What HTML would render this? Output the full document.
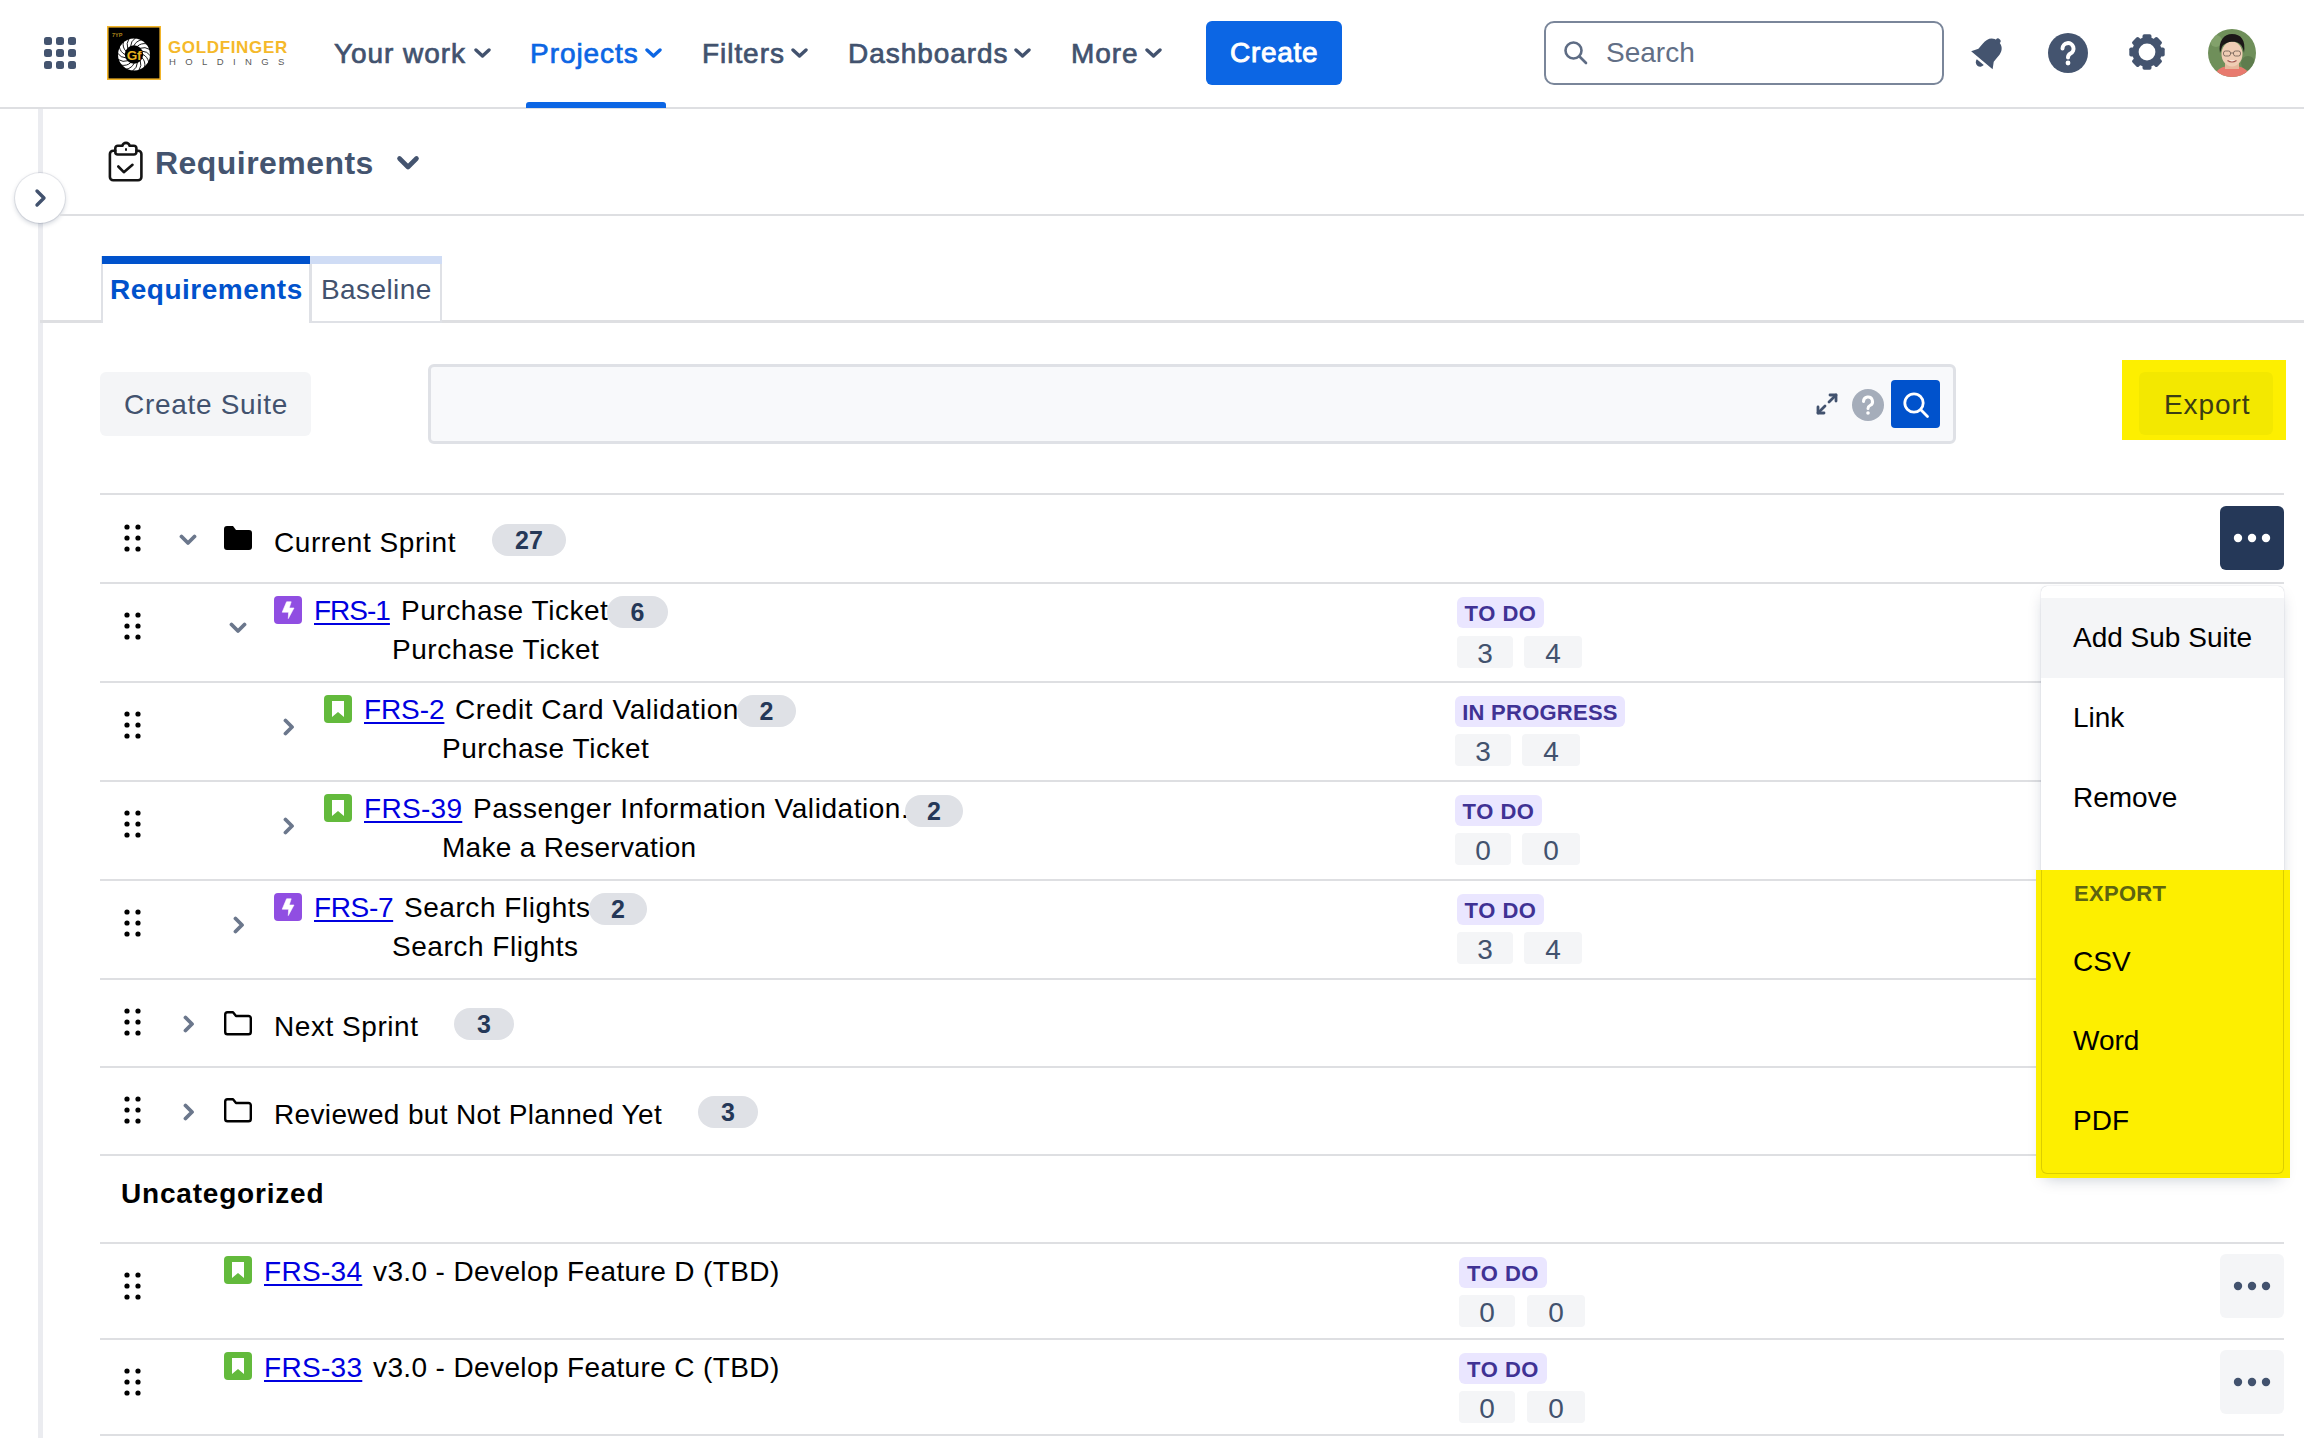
<!DOCTYPE html>
<html><head><meta charset="utf-8">
<style>
*{box-sizing:border-box;margin:0;padding:0}
html,body{width:2304px;height:1438px;overflow:hidden;background:#fff;font-family:"Liberation Sans",sans-serif;}
.a{position:absolute}
.t{position:absolute;white-space:nowrap;line-height:1}
.nav{color:#42526e;font-size:28px;font-weight:normal;-webkit-text-stroke:0.7px currentColor;letter-spacing:0.95px}
.hl{background:#fdef00}
.line{position:absolute;background:#dedfe2}
.bdg{height:32px;border-radius:16px;background:#dfe1e6;color:#253858;font-weight:bold;font-size:25px;line-height:33px;text-align:center}
.loz{height:31px;border-radius:6px;background:#eae6ff;color:#403294;font-weight:bold;font-size:22px;line-height:33px;text-align:center;white-space:nowrap;letter-spacing:.5px}
.num{height:32px;border-radius:4px;background:#f4f5f7;color:#42526e;font-size:28px;line-height:35px;text-align:center}
.dd{font-size:28px;color:#000}
</style></head><body>
<!-- NAV -->
<div class="a" style="left:0;top:0;width:2304px;height:108px;background:#fff"></div>
<div class="line" style="left:0;top:107px;width:2304px;height:2px"></div>
<!-- grid icon -->
<svg class="a" style="left:44px;top:37px" width="32" height="32" viewBox="0 0 32 32" fill="#44546f">
<rect x="0" y="0" width="8" height="8" rx="2.5"/><rect x="12" y="0" width="8" height="8" rx="2.5"/><rect x="24" y="0" width="8" height="8" rx="2.5"/>
<rect x="0" y="12" width="8" height="8" rx="2.5"/><rect x="12" y="12" width="8" height="8" rx="2.5"/><rect x="24" y="12" width="8" height="8" rx="2.5"/>
<rect x="0" y="24" width="8" height="8" rx="2.5"/><rect x="12" y="24" width="8" height="8" rx="2.5"/><rect x="24" y="24" width="8" height="8" rx="2.5"/>
</svg>
<!-- logo -->
<svg class="a" style="left:107px;top:26px" width="54" height="54" viewBox="0 0 54 54">
<rect x="0.8" y="0.8" width="52.4" height="52.4" fill="#000" stroke="#f2b52a" stroke-width="1.6"/>
<circle cx="27" cy="28.5" r="16" fill="#fff"/>
<circle cx="27" cy="28.5" r="9.2" fill="#000"/>
<g stroke="#000" stroke-width="0.9" fill="none"><path d="M35.80 28.50 Q40.37 30.38 41.83 36.39"/><path d="M35.13 31.87 Q38.63 35.35 37.69 41.46"/><path d="M33.22 34.72 Q35.12 39.28 31.91 44.57"/><path d="M30.37 36.63 Q30.38 41.57 25.39 45.22"/><path d="M27.00 37.30 Q25.12 41.87 19.11 43.33"/><path d="M23.63 36.63 Q20.15 40.13 14.04 39.19"/><path d="M20.78 34.72 Q16.22 36.62 10.93 33.41"/><path d="M18.87 31.87 Q13.93 31.88 10.28 26.89"/><path d="M18.20 28.50 Q13.63 26.62 12.17 20.61"/><path d="M18.87 25.13 Q15.37 21.65 16.31 15.54"/><path d="M20.78 22.28 Q18.88 17.72 22.09 12.43"/><path d="M23.63 20.37 Q23.62 15.43 28.61 11.78"/><path d="M27.00 19.70 Q28.88 15.13 34.89 13.67"/><path d="M30.37 20.37 Q33.85 16.87 39.96 17.81"/><path d="M33.22 22.28 Q37.78 20.38 43.07 23.59"/><path d="M35.13 25.13 Q40.07 25.12 43.72 30.11"/></g>
<text x="27" y="34.0" font-family="Liberation Sans" font-weight="bold" font-size="13.5" fill="#e8b21f" text-anchor="middle" letter-spacing="-0.3">Gf</text>
<text x="5" y="11" font-family="Liberation Sans" font-weight="bold" font-size="5.5" fill="#a8821a">7YP</text>
</svg>
<div class="t" style="left:168px;top:39px;font-size:17px;font-weight:bold;color:#f5b92a;letter-spacing:0.65px">GOLDFINGER</div>
<div class="t" style="left:169px;top:57px;font-size:9.5px;color:#5a5a5a;letter-spacing:9.4px;font-weight:normal">HOLDINGS</div>

<div class="t nav" style="left:334px;top:40px">Your work</div>
<svg class="a" style="left:474px;top:47px" width="17" height="12" viewBox="0 0 17 12"><path d="M2 3 L8.5 9 L15 3" fill="none" stroke="#42526e" stroke-width="3.4" stroke-linecap="round" stroke-linejoin="round"/></svg>
<div class="t nav" style="left:530px;top:40px;color:#0c66e4">Projects</div>
<svg class="a" style="left:645px;top:47px" width="17" height="12" viewBox="0 0 17 12"><path d="M2 3 L8.5 9 L15 3" fill="none" stroke="#0c66e4" stroke-width="3.4" stroke-linecap="round" stroke-linejoin="round"/></svg>
<div class="a" style="left:526px;top:102px;width:140px;height:6px;background:#0c66e4;border-radius:3px 3px 0 0"></div>
<div class="t nav" style="left:702px;top:40px">Filters</div>
<svg class="a" style="left:791px;top:47px" width="17" height="12" viewBox="0 0 17 12"><path d="M2 3 L8.5 9 L15 3" fill="none" stroke="#42526e" stroke-width="3.4" stroke-linecap="round" stroke-linejoin="round"/></svg>
<div class="t nav" style="left:848px;top:40px">Dashboards</div>
<svg class="a" style="left:1014px;top:47px" width="17" height="12" viewBox="0 0 17 12"><path d="M2 3 L8.5 9 L15 3" fill="none" stroke="#42526e" stroke-width="3.4" stroke-linecap="round" stroke-linejoin="round"/></svg>
<div class="t nav" style="left:1071px;top:40px">More</div>
<svg class="a" style="left:1145px;top:47px" width="17" height="12" viewBox="0 0 17 12"><path d="M2 3 L8.5 9 L15 3" fill="none" stroke="#42526e" stroke-width="3.4" stroke-linecap="round" stroke-linejoin="round"/></svg>
<div class="a" style="left:1206px;top:21px;width:136px;height:64px;background:#0c66e4;border-radius:6px"></div>
<div class="t" style="left:1230px;top:39px;color:#fff;font-size:28px;font-weight:normal;-webkit-text-stroke:0.9px #fff;letter-spacing:0.7px">Create</div>

<div class="a" style="left:1544px;top:21px;width:400px;height:64px;border:2px solid #7a869a;border-radius:10px"></div>
<svg class="a" style="left:1563px;top:40px" width="26" height="26" viewBox="0 0 26 26"><circle cx="10.5" cy="10.5" r="8" fill="none" stroke="#5e6c84" stroke-width="2.6"/><line x1="16.5" y1="16.5" x2="23" y2="23" stroke="#5e6c84" stroke-width="2.6" stroke-linecap="round"/></svg>
<div class="t" style="left:1606px;top:39px;font-size:28px;color:#626f86;letter-spacing:0px">Search</div>
<!-- bell -->
<svg class="a" style="left:1966px;top:31px" width="44" height="44" viewBox="0 0 44 44"><g transform="rotate(40 22 22)" fill="#44546f"><path d="M22 6.5 C14.5 6.5 12 12 12 18 V25 L8 31.5 H36 L32 25 V18 C32 12 29.5 6.5 22 6.5z"/><circle cx="22" cy="6.5" r="2.6"/><path d="M17.5 34 a4.5 4.5 0 0 0 9 0z"/></g></svg>
<!-- help -->
<svg class="a" style="left:2047px;top:32px" width="42" height="42" viewBox="0 0 42 42"><circle cx="21" cy="21" r="20" fill="#44546f"/><path d="M15.5 16.5 a5.5 5.5 0 1 1 8 5 c-1.8 1 -2.5 2 -2.5 4" fill="none" stroke="#fff" stroke-width="4" stroke-linecap="round"/><circle cx="21" cy="31" r="2.4" fill="#fff"/></svg>
<!-- gear -->
<svg class="a" style="left:2125px;top:30px" width="44" height="44" viewBox="0 0 44 44"><g fill="#44546f"><circle cx="22" cy="22" r="14.8"/><rect x="17.5" y="4.3" width="9" height="8" rx="1.8" transform="rotate(0 22 22)"/><rect x="17.5" y="4.3" width="9" height="8" rx="1.8" transform="rotate(45 22 22)"/><rect x="17.5" y="4.3" width="9" height="8" rx="1.8" transform="rotate(90 22 22)"/><rect x="17.5" y="4.3" width="9" height="8" rx="1.8" transform="rotate(135 22 22)"/><rect x="17.5" y="4.3" width="9" height="8" rx="1.8" transform="rotate(180 22 22)"/><rect x="17.5" y="4.3" width="9" height="8" rx="1.8" transform="rotate(225 22 22)"/><rect x="17.5" y="4.3" width="9" height="8" rx="1.8" transform="rotate(270 22 22)"/><rect x="17.5" y="4.3" width="9" height="8" rx="1.8" transform="rotate(315 22 22)"/></g><circle cx="22" cy="22" r="8.4" fill="#fff"/></svg>
<!-- avatar -->
<svg class="a" style="left:2208px;top:29px" width="48" height="48" viewBox="0 0 48 48"><defs><clipPath id="cav"><circle cx="24" cy="24" r="24"/></clipPath></defs><g clip-path="url(#cav)"><rect width="48" height="48" fill="#6f8f5a"/><circle cx="8" cy="12" r="6" fill="#8aa872" opacity=".7"/><circle cx="40" cy="34" r="7" fill="#577447" opacity=".7"/><path d="M6 48 C8 40 14 37 24 37 C34 37 40 40 42 48z" fill="#e87a6e"/><path d="M17 34 h14 v6 h-14z" fill="#e6b89c"/><ellipse cx="24" cy="25" rx="10.5" ry="12.5" fill="#efcdb4"/><path d="M12 24 C10 12 16 5 24 5 C33 5 38 11 36 24 C35 17 32 14 28 13 C22 12 16 14 14 18z" fill="#1b1717"/><g fill="none" stroke="#6b5b50" stroke-width=".8"><rect x="15.5" y="22" width="7" height="5" rx="2"/><rect x="25.5" y="22" width="7" height="5" rx="2"/><path d="M22.5 24 h3"/></g><path d="M19.5 31.5 q4.5 3 9 0" stroke="#a0524a" stroke-width="1.2" fill="#fff"/></g></svg>
<!-- SIDEBAR -->
<div class="a" style="left:38px;top:109px;width:5px;height:1329px;background:#ebecf0"></div>
<div class="a" style="left:15px;top:173px;width:50px;height:50px;border-radius:50%;background:#fff;box-shadow:0 0 0 1px rgba(9,30,66,.08),0 2px 5px rgba(9,30,66,.2)"></div>
<svg class="a" style="left:32px;top:188px" width="18" height="20" viewBox="0 0 18 20"><path d="M5 3 L12 10 L5 17" fill="none" stroke="#42526e" stroke-width="3.4" stroke-linecap="round" stroke-linejoin="round"/></svg>

<!-- HEADER -->
<svg class="a" style="left:107px;top:141px" width="38" height="42" viewBox="0 0 38 42"><g fill="none" stroke="#141414" stroke-width="2.6" stroke-linejoin="round" stroke-linecap="round"><path d="M8.3 9.8 H6.2 a3.3 3.3 0 0 0 -3.3 3.3 V35.9 a3.3 3.3 0 0 0 3.3 3.3 H31.1 a3.3 3.3 0 0 0 3.3 -3.3 V13.1 a3.3 3.3 0 0 0 -3.3 -3.3 H29.4"/><path d="M8.3 7.2 a2.5 2.5 0 0 1 2.5 -2.5 H15.5 a3.5 2.8 0 0 1 7 0 H26.9 a2.5 2.5 0 0 1 2.5 2.5 V11 a2.5 2.5 0 0 1 -2.5 2.5 H10.8 a2.5 2.5 0 0 1 -2.5 -2.5z"/><path d="M11.3 25.5 L16.8 31.2 L25.5 23.8"/></g><rect x="18" y="7" width="2" height="3" rx="1" fill="#141414"/></svg>
<div class="t" style="left:155px;top:147px;font-size:32px;font-weight:bold;color:#44546f;letter-spacing:0.45px">Requirements</div>
<svg class="a" style="left:396px;top:154px" width="24" height="18" viewBox="0 0 24 18"><path d="M3.5 4.5 L12 13 L20.5 4.5" fill="none" stroke="#44546f" stroke-width="4.6" stroke-linecap="round" stroke-linejoin="round"/></svg>
<div class="line" style="left:60px;top:214px;width:2244px;height:2px"></div>

<!-- TABS -->
<div class="line" style="left:40px;top:320px;width:2264px;height:3px"></div>
<div class="a" style="left:101px;top:256px;width:210px;height:67px;background:#fff;border:2px solid #dfe1e6;border-top:none;border-bottom:none"></div>
<div class="a" style="left:310px;top:256px;width:132px;height:67px;background:#fff;border:2px solid #dfe1e6;border-top:none"></div>
<div class="a" style="left:102px;top:256px;width:208px;height:8px;background:#0052cc"></div>
<div class="a" style="left:310px;top:256px;width:132px;height:8px;background:#cfdcf5"></div>
<div class="t" style="left:110px;top:276px;font-size:28px;font-weight:bold;color:#0052cc;letter-spacing:0.5px">Requirements</div>
<div class="t" style="left:321px;top:276px;font-size:28px;color:#42526e;letter-spacing:0.4px">Baseline</div>

<!-- TOOLBAR -->
<div class="a" style="left:100px;top:372px;width:211px;height:64px;background:#f4f5f7;border-radius:6px"></div>
<div class="t" style="left:124px;top:391px;font-size:28px;color:#42526e;letter-spacing:0.7px">Create Suite</div>
<div class="a" style="left:428px;top:364px;width:1528px;height:80px;background:#f8f9fb;border:3px solid #dfe1e6;border-radius:6px"></div>
<svg class="a" style="left:1814px;top:391px" width="26" height="26" viewBox="0 0 26 26"><g fill="none" stroke="#42526e" stroke-width="2.8" stroke-linecap="round" stroke-linejoin="round"><path d="M15 11 L22 4"/><path d="M16 4 H22 V10"/><path d="M11 15 L4 22"/><path d="M4 16 V22 H10"/></g></svg>
<svg class="a" style="left:1851px;top:388px" width="34" height="34" viewBox="0 0 34 34"><circle cx="17" cy="17" r="16" fill="#a5adba"/><path d="M12.5 13.5 a4.5 4.5 0 1 1 6.5 4 c-1.3 .7 -2 1.5 -2 3" fill="none" stroke="#fff" stroke-width="3" stroke-linecap="round"/><circle cx="17" cy="25" r="1.8" fill="#fff"/></svg>
<div class="a" style="left:1891px;top:380px;width:49px;height:48px;background:#0052cc;border-radius:4px"></div>
<svg class="a" style="left:1901px;top:390px" width="30" height="30" viewBox="0 0 30 30"><circle cx="13" cy="13" r="9.2" fill="none" stroke="#fff" stroke-width="2.8"/><line x1="19.8" y1="19.8" x2="26.5" y2="26.5" stroke="#fff" stroke-width="2.8" stroke-linecap="round"/></svg>

<div class="a hl" style="left:2122px;top:360px;width:164px;height:80px"></div>
<div class="a" style="left:2139px;top:372px;width:134px;height:63px;background:#f3e800;border-radius:6px"></div>
<div class="t" style="left:2164px;top:391px;font-size:28px;color:#3b3d14;letter-spacing:0.9px">Export</div>

<!-- TREE -->
<div class="line" style="left:100px;top:493px;width:2184px;height:2px"></div>
<div class="line" style="left:100px;top:582px;width:2184px;height:2px"></div>
<div class="line" style="left:100px;top:681px;width:2184px;height:2px"></div>
<div class="line" style="left:100px;top:780px;width:2184px;height:2px"></div>
<div class="line" style="left:100px;top:879px;width:2184px;height:2px"></div>
<div class="line" style="left:100px;top:978px;width:2184px;height:2px"></div>
<div class="line" style="left:100px;top:1066px;width:2184px;height:2px"></div>
<div class="line" style="left:100px;top:1154px;width:2184px;height:2px"></div>
<div class="line" style="left:100px;top:1242px;width:2184px;height:2px"></div>
<div class="line" style="left:100px;top:1338px;width:2184px;height:2px"></div>
<div class="line" style="left:100px;top:1434px;width:2184px;height:2px"></div>
<svg class="a" style="left:124px;top:524px" width="18" height="28" viewBox="0 0 18 28" fill="#000"><circle cx="3" cy="3" r="2.6"/><circle cx="14" cy="3" r="2.6"/><circle cx="3" cy="14" r="2.6"/><circle cx="14" cy="14" r="2.6"/><circle cx="3" cy="25" r="2.6"/><circle cx="14" cy="25" r="2.6"/></svg>
<svg class="a" style="left:179px;top:534px" width="18" height="12" viewBox="0 0 18 12"><path d="M2.5 2.5 L9 9 L15.5 2.5" fill="none" stroke="#6b778c" stroke-width="3.8" stroke-linecap="round" stroke-linejoin="round"/></svg>
<svg class="a" style="left:224px;top:526px" width="28" height="25" viewBox="0 0 28 25"><path d="M0 3 a3 3 0 0 1 3 -3 H9 L12 4 H25 a3 3 0 0 1 3 3 V21 a3 3 0 0 1 -3 3 H3 a3 3 0 0 1 -3 -3z" fill="#000"/></svg>
<div class="t" style="left:274px;top:529px;font-size:28px;color:#000;font-weight:normal;letter-spacing:0.55px;">Current Sprint</div>
<div class="a bdg" style="left:492px;top:524px;width:74px">27</div>
<div class="a" style="left:2220px;top:506px;width:64px;height:64px;border-radius:6px;background:#253858"></div>
<svg class="a" style="left:2220px;top:506px" width="64" height="64" viewBox="0 0 64 64" fill="#fff"><circle cx="18" cy="32" r="4.2"/><circle cx="32" cy="32" r="4.2"/><circle cx="46" cy="32" r="4.2"/></svg>
<svg class="a" style="left:124px;top:612px" width="18" height="28" viewBox="0 0 18 28" fill="#000"><circle cx="3" cy="3" r="2.6"/><circle cx="14" cy="3" r="2.6"/><circle cx="3" cy="14" r="2.6"/><circle cx="14" cy="14" r="2.6"/><circle cx="3" cy="25" r="2.6"/><circle cx="14" cy="25" r="2.6"/></svg>
<svg class="a" style="left:229px;top:622px" width="18" height="12" viewBox="0 0 18 12"><path d="M2.5 2.5 L9 9 L15.5 2.5" fill="none" stroke="#6b778c" stroke-width="3.8" stroke-linecap="round" stroke-linejoin="round"/></svg>
<svg class="a" style="left:274px;top:596px" width="28" height="28" viewBox="0 0 28 28"><rect width="28" height="28" rx="4" fill="#904ee2"/><path d="M12.6 5.8 H17.2 L15.2 12 H20 L14.3 22.6 L14.6 16.2 H8.2z" fill="#fff" stroke="#fff" stroke-width="0.6" stroke-linejoin="round"/></svg>
<div class="t" style="left:314px;top:597px;font-size:28px;color:#000;font-weight:normal;letter-spacing:-1.0px;color:#0000e0;text-decoration:underline;text-underline-offset:3px;text-decoration-thickness:2px">FRS-1</div>
<div class="t" style="left:401px;top:597px;font-size:28px;color:#000;font-weight:normal;letter-spacing:0.55px;">Purchase Ticket</div>
<div class="a bdg" style="left:607px;top:596px;width:61px">6</div>
<div class="t" style="left:392px;top:636px;font-size:28px;color:#000;font-weight:normal;letter-spacing:0.55px;">Purchase Ticket</div>
<div class="a loz" style="left:1457px;top:597px;width:87px">TO DO</div>
<div class="a num" style="left:1457px;top:636px;width:56px">3</div>
<div class="a num" style="left:1524px;top:636px;width:58px">4</div>
<svg class="a" style="left:124px;top:711px" width="18" height="28" viewBox="0 0 18 28" fill="#000"><circle cx="3" cy="3" r="2.6"/><circle cx="14" cy="3" r="2.6"/><circle cx="3" cy="14" r="2.6"/><circle cx="14" cy="14" r="2.6"/><circle cx="3" cy="25" r="2.6"/><circle cx="14" cy="25" r="2.6"/></svg>
<svg class="a" style="left:283px;top:718px" width="12" height="18" viewBox="0 0 12 18"><path d="M2.5 2.5 L9 9 L2.5 15.5" fill="none" stroke="#6b778c" stroke-width="3.8" stroke-linecap="round" stroke-linejoin="round"/></svg>
<svg class="a" style="left:324px;top:695px" width="28" height="28" viewBox="0 0 28 28"><rect width="28" height="28" rx="4" fill="#63ba3c"/><path d="M8 6 H20 V22 L14 17 L8 22z" fill="#fff"/></svg>
<div class="t" style="left:364px;top:696px;font-size:28px;color:#000;font-weight:normal;letter-spacing:-0.1px;color:#0000e0;text-decoration:underline;text-underline-offset:3px;text-decoration-thickness:2px">FRS-2</div>
<div class="t" style="left:455px;top:696px;font-size:28px;color:#000;font-weight:normal;letter-spacing:0.55px;">Credit Card Validation</div>
<div class="a bdg" style="left:737px;top:695px;width:59px">2</div>
<div class="t" style="left:442px;top:735px;font-size:28px;color:#000;font-weight:normal;letter-spacing:0.55px;">Purchase Ticket</div>
<div class="a loz" style="left:1455px;top:696px;width:170px"><span style="letter-spacing:.25px">IN PROGRESS</span></div>
<div class="a num" style="left:1455px;top:734px;width:56px">3</div>
<div class="a num" style="left:1522px;top:734px;width:58px">4</div>
<svg class="a" style="left:124px;top:810px" width="18" height="28" viewBox="0 0 18 28" fill="#000"><circle cx="3" cy="3" r="2.6"/><circle cx="14" cy="3" r="2.6"/><circle cx="3" cy="14" r="2.6"/><circle cx="14" cy="14" r="2.6"/><circle cx="3" cy="25" r="2.6"/><circle cx="14" cy="25" r="2.6"/></svg>
<svg class="a" style="left:283px;top:817px" width="12" height="18" viewBox="0 0 12 18"><path d="M2.5 2.5 L9 9 L2.5 15.5" fill="none" stroke="#6b778c" stroke-width="3.8" stroke-linecap="round" stroke-linejoin="round"/></svg>
<svg class="a" style="left:324px;top:794px" width="28" height="28" viewBox="0 0 28 28"><rect width="28" height="28" rx="4" fill="#63ba3c"/><path d="M8 6 H20 V22 L14 17 L8 22z" fill="#fff"/></svg>
<div class="t" style="left:364px;top:795px;font-size:28px;color:#000;font-weight:normal;letter-spacing:0.3px;color:#0000e0;text-decoration:underline;text-underline-offset:3px;text-decoration-thickness:2px">FRS-39</div>
<div class="t" style="left:473px;top:795px;font-size:28px;color:#000;font-weight:normal;letter-spacing:0.55px;">Passenger Information Validation.</div>
<div class="a bdg" style="left:905px;top:795px;width:58px">2</div>
<div class="t" style="left:442px;top:834px;font-size:28px;color:#000;font-weight:normal;letter-spacing:0.3px;">Make a Reservation</div>
<div class="a loz" style="left:1455px;top:795px;width:87px">TO DO</div>
<div class="a num" style="left:1455px;top:833px;width:56px">0</div>
<div class="a num" style="left:1522px;top:833px;width:58px">0</div>
<svg class="a" style="left:124px;top:909px" width="18" height="28" viewBox="0 0 18 28" fill="#000"><circle cx="3" cy="3" r="2.6"/><circle cx="14" cy="3" r="2.6"/><circle cx="3" cy="14" r="2.6"/><circle cx="14" cy="14" r="2.6"/><circle cx="3" cy="25" r="2.6"/><circle cx="14" cy="25" r="2.6"/></svg>
<svg class="a" style="left:233px;top:916px" width="12" height="18" viewBox="0 0 12 18"><path d="M2.5 2.5 L9 9 L2.5 15.5" fill="none" stroke="#6b778c" stroke-width="3.8" stroke-linecap="round" stroke-linejoin="round"/></svg>
<svg class="a" style="left:274px;top:893px" width="28" height="28" viewBox="0 0 28 28"><rect width="28" height="28" rx="4" fill="#904ee2"/><path d="M12.6 5.8 H17.2 L15.2 12 H20 L14.3 22.6 L14.6 16.2 H8.2z" fill="#fff" stroke="#fff" stroke-width="0.6" stroke-linejoin="round"/></svg>
<div class="t" style="left:314px;top:894px;font-size:28px;color:#000;font-weight:normal;letter-spacing:-0.35px;color:#0000e0;text-decoration:underline;text-underline-offset:3px;text-decoration-thickness:2px">FRS-7</div>
<div class="t" style="left:404px;top:894px;font-size:28px;color:#000;font-weight:normal;letter-spacing:0.55px;">Search Flights</div>
<div class="a bdg" style="left:589px;top:893px;width:58px">2</div>
<div class="t" style="left:392px;top:933px;font-size:28px;color:#000;font-weight:normal;letter-spacing:0.55px;">Search Flights</div>
<div class="a loz" style="left:1457px;top:894px;width:87px">TO DO</div>
<div class="a num" style="left:1457px;top:932px;width:56px">3</div>
<div class="a num" style="left:1524px;top:932px;width:58px">4</div>
<svg class="a" style="left:124px;top:1008px" width="18" height="28" viewBox="0 0 18 28" fill="#000"><circle cx="3" cy="3" r="2.6"/><circle cx="14" cy="3" r="2.6"/><circle cx="3" cy="14" r="2.6"/><circle cx="14" cy="14" r="2.6"/><circle cx="3" cy="25" r="2.6"/><circle cx="14" cy="25" r="2.6"/></svg>
<svg class="a" style="left:183px;top:1015px" width="12" height="18" viewBox="0 0 12 18"><path d="M2.5 2.5 L9 9 L2.5 15.5" fill="none" stroke="#6b778c" stroke-width="3.8" stroke-linecap="round" stroke-linejoin="round"/></svg>
<svg class="a" style="left:224px;top:1011px" width="28" height="25" viewBox="0 0 28 25"><path d="M1.2 3.5 a2.3 2.3 0 0 1 2.3 -2.3 H9 L12 5 H24.5 a2.3 2.3 0 0 1 2.3 2.3 V21 a2.3 2.3 0 0 1 -2.3 2.3 H3.5 a2.3 2.3 0 0 1 -2.3 -2.3z" fill="none" stroke="#000" stroke-width="2.4" stroke-linejoin="round"/></svg>
<div class="t" style="left:274px;top:1013px;font-size:28px;color:#000;font-weight:normal;letter-spacing:0.55px;">Next Sprint</div>
<div class="a bdg" style="left:454px;top:1008px;width:60px">3</div>
<svg class="a" style="left:124px;top:1096px" width="18" height="28" viewBox="0 0 18 28" fill="#000"><circle cx="3" cy="3" r="2.6"/><circle cx="14" cy="3" r="2.6"/><circle cx="3" cy="14" r="2.6"/><circle cx="14" cy="14" r="2.6"/><circle cx="3" cy="25" r="2.6"/><circle cx="14" cy="25" r="2.6"/></svg>
<svg class="a" style="left:183px;top:1103px" width="12" height="18" viewBox="0 0 12 18"><path d="M2.5 2.5 L9 9 L2.5 15.5" fill="none" stroke="#6b778c" stroke-width="3.8" stroke-linecap="round" stroke-linejoin="round"/></svg>
<svg class="a" style="left:224px;top:1098px" width="28" height="25" viewBox="0 0 28 25"><path d="M1.2 3.5 a2.3 2.3 0 0 1 2.3 -2.3 H9 L12 5 H24.5 a2.3 2.3 0 0 1 2.3 2.3 V21 a2.3 2.3 0 0 1 -2.3 2.3 H3.5 a2.3 2.3 0 0 1 -2.3 -2.3z" fill="none" stroke="#000" stroke-width="2.4" stroke-linejoin="round"/></svg>
<div class="t" style="left:274px;top:1101px;font-size:28px;color:#000;font-weight:normal;letter-spacing:0.35px;">Reviewed but Not Planned Yet</div>
<div class="a bdg" style="left:698px;top:1096px;width:60px">3</div>
<div class="t" style="left:121px;top:1180px;font-size:28px;color:#000;font-weight:bold;letter-spacing:0.8px;">Uncategorized</div>
<svg class="a" style="left:124px;top:1272px" width="18" height="28" viewBox="0 0 18 28" fill="#000"><circle cx="3" cy="3" r="2.6"/><circle cx="14" cy="3" r="2.6"/><circle cx="3" cy="14" r="2.6"/><circle cx="14" cy="14" r="2.6"/><circle cx="3" cy="25" r="2.6"/><circle cx="14" cy="25" r="2.6"/></svg>
<svg class="a" style="left:224px;top:1256px" width="28" height="28" viewBox="0 0 28 28"><rect width="28" height="28" rx="4" fill="#63ba3c"/><path d="M8 6 H20 V22 L14 17 L8 22z" fill="#fff"/></svg>
<div class="t" style="left:264px;top:1258px;font-size:28px;color:#000;font-weight:normal;letter-spacing:0.3px;color:#0000e0;text-decoration:underline;text-underline-offset:3px;text-decoration-thickness:2px">FRS-34</div>
<div class="t" style="left:373px;top:1258px;font-size:28px;color:#000;font-weight:normal;letter-spacing:0.38px;">v3.0 - Develop Feature D (TBD)</div>
<div class="a loz" style="left:1459px;top:1257px;width:88px">TO DO</div>
<div class="a num" style="left:1459px;top:1295px;width:56px">0</div>
<div class="a num" style="left:1527px;top:1295px;width:58px">0</div>
<div class="a" style="left:2220px;top:1254px;width:64px;height:64px;border-radius:6px;background:#f4f5f7"></div>
<svg class="a" style="left:2220px;top:1254px" width="64" height="64" viewBox="0 0 64 64" fill="#42526e"><circle cx="18" cy="32" r="4.2"/><circle cx="32" cy="32" r="4.2"/><circle cx="46" cy="32" r="4.2"/></svg>
<svg class="a" style="left:124px;top:1368px" width="18" height="28" viewBox="0 0 18 28" fill="#000"><circle cx="3" cy="3" r="2.6"/><circle cx="14" cy="3" r="2.6"/><circle cx="3" cy="14" r="2.6"/><circle cx="14" cy="14" r="2.6"/><circle cx="3" cy="25" r="2.6"/><circle cx="14" cy="25" r="2.6"/></svg>
<svg class="a" style="left:224px;top:1352px" width="28" height="28" viewBox="0 0 28 28"><rect width="28" height="28" rx="4" fill="#63ba3c"/><path d="M8 6 H20 V22 L14 17 L8 22z" fill="#fff"/></svg>
<div class="t" style="left:264px;top:1354px;font-size:28px;color:#000;font-weight:normal;letter-spacing:0.3px;color:#0000e0;text-decoration:underline;text-underline-offset:3px;text-decoration-thickness:2px">FRS-33</div>
<div class="t" style="left:373px;top:1354px;font-size:28px;color:#000;font-weight:normal;letter-spacing:0.38px;">v3.0 - Develop Feature C (TBD)</div>
<div class="a loz" style="left:1459px;top:1353px;width:88px">TO DO</div>
<div class="a num" style="left:1459px;top:1391px;width:56px">0</div>
<div class="a num" style="left:1527px;top:1391px;width:58px">0</div>
<div class="a" style="left:2220px;top:1350px;width:64px;height:64px;border-radius:6px;background:#f4f5f7"></div>
<svg class="a" style="left:2220px;top:1350px" width="64" height="64" viewBox="0 0 64 64" fill="#42526e"><circle cx="18" cy="32" r="4.2"/><circle cx="32" cy="32" r="4.2"/><circle cx="46" cy="32" r="4.2"/></svg>
<div class="a" style="left:2041px;top:586px;width:243px;height:588px;background:#fff;border-radius:6px;box-shadow:0 0 1px rgba(9,30,66,.31),0 8px 16px -4px rgba(9,30,66,.25)"></div>
<div class="a" style="left:2041px;top:598px;width:243px;height:80px;background:#f4f5f7"></div>
<div class="t dd" style="left:2073px;top:624px">Add Sub Suite</div>
<div class="t dd" style="left:2073px;top:704px">Link</div>
<div class="t dd" style="left:2073px;top:784px">Remove</div>
<div class="a" style="left:2036px;top:870px;width:254px;height:308px;background:#fdef00"></div>
<div class="a" style="left:2041px;top:870px;width:243px;height:304px;border:1px solid rgba(120,110,0,.25);border-top:none;border-radius:0 0 6px 6px"></div>
<div class="t" style="left:2074px;top:883px;font-size:22px;font-weight:bold;color:#5e6410;letter-spacing:0.3px">EXPORT</div>
<div class="t dd" style="left:2073px;top:948px">CSV</div>
<div class="t dd" style="left:2073px;top:1027px">Word</div>
<div class="t dd" style="left:2073px;top:1107px">PDF</div>

</body></html>
